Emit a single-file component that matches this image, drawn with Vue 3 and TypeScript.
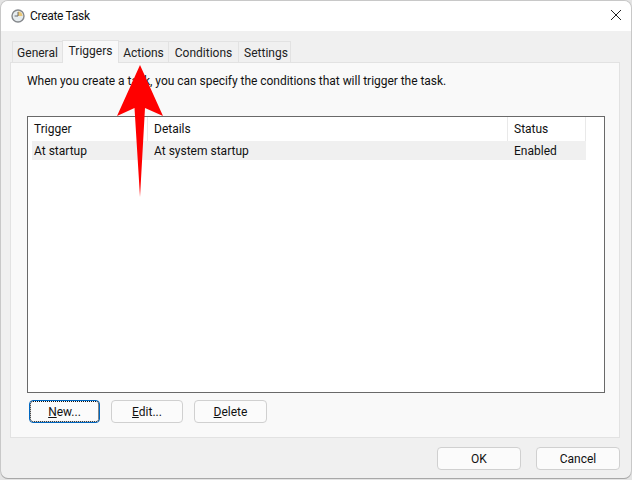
<script setup lang="ts">
const tabs = ['General', 'Triggers', 'Actions', 'Conditions', 'Settings']
const columns = [
  { label: 'Trigger', value: 'At startup', cls: 'c1' },
  { label: 'Details', value: 'At system startup', cls: 'c2' },
  { label: 'Status', value: 'Enabled', cls: 'c3' },
]
</script>

<template>
  <div class="desktop">
    <div class="window">
      <header class="titlebar">
        <svg class="clock" width="14" height="14" viewBox="0 0 14 14">
          <circle cx="7" cy="7" r="6" fill="#e6ecef" stroke="#85888c" stroke-width="1.4" />
          <path d="M7 7 V2.4 A4.6 4.6 0 0 1 11.6 7 Z" fill="#eac777" />
          <path d="M7 3 V7 H3.6" fill="none" stroke="#5b5e62" stroke-width="0.9" />
        </svg>
        <span class="title">Create Task</span>
        <svg class="close" width="10" height="10" viewBox="0 0 10 10">
          <path d="M0 0 L10 10 M10 0 L0 10" stroke="#222" stroke-width="1" fill="none" />
        </svg>
      </header>
      <main class="body">
        <nav class="tabs">
          <div v-for="t in tabs" :key="t" class="tab" :class="{ active: t === 'Triggers' }">{{ t }}</div>
        </nav>
        <section class="panel">
          <p class="hint">When you create a task, you can specify the conditions that will trigger the task.</p>
          <div class="list">
            <div class="row head">
              <div v-for="c in columns" :key="c.label" class="cell" :class="c.cls">{{ c.label }}</div>
            </div>
            <div class="row data">
              <div v-for="c in columns" :key="c.label" class="cell" :class="c.cls">{{ c.value }}</div>
            </div>
          </div>
          <div class="actions">
            <button class="btn focused"><u>N</u>ew...</button>
            <button class="btn edit"><u>E</u>dit...</button>
            <button class="btn small"><u>D</u>elete</button>
          </div>
        </section>
        <footer class="footer">
          <button class="btn large">OK</button>
          <button class="btn large">Cancel</button>
        </footer>
      </main>
    </div>
    <svg class="arrow" width="62" height="136" viewBox="0 0 62 136">
      <path d="M31 1 L54 52 L36 44 L31 133 L25.5 44 L8 52 Z" fill="#ff0000" />
    </svg>
  </div>
</template>

<style>
html, body { margin: 0; background: #e4e4e4; }
</style>

<style scoped>
.desktop {
  position: relative;
  width: 632px;
  height: 480px;
  padding: 1px 1px 2px 1px;
  box-sizing: border-box;
  font-family: Roboto, "Open Sans", sans-serif;
  font-size: 12px;
  color: #111;
}
.window {
  height: 100%;
  display: flex;
  flex-direction: column;
  border-radius: 7px;
  overflow: hidden;
  background: #f0f0f0;
  box-shadow: 0 1px 0 0 #a8a8a8, 0 0 0 1px #c8c8c8;
}
.titlebar {
  height: 30px;
  flex: none;
  box-sizing: border-box;
  background: #fff;
  display: flex;
  align-items: center;
  padding: 0 10px 0 10px;
}
.clock { flex: none; }
.title { margin-left: 5px; letter-spacing: -0.3px; }
.close { margin-left: auto; margin-bottom: 2px; }
.body {
  flex: 1;
  display: flex;
  flex-direction: column;
  padding: 9px 11px 8px 9px;
  min-height: 0;
}
.tabs {
  display: flex;
  height: 23px;
  padding-left: 2px;
  position: relative;
  z-index: 1;
  margin-bottom: -1px;
  align-items: flex-end;
}
.tab {
  height: 21px;
  margin-bottom: 1px;
  line-height: 22px;
  box-sizing: border-box;
  text-align: center;
  background: #f0f0f0;
  border: 1px solid #e2e2e2;
  border-bottom: 0;
  margin-left: -1px;
  color: #222;
}
.tab:nth-child(1) { width: 51px; margin-left: 0; }
.tab:nth-child(2) { width: 57px; }
.tab:nth-child(3) { width: 51px; }
.tab:nth-child(4) { width: 71px; }
.tab:nth-child(5) { width: 53px; padding-left: 3px; }
.tab.active {
  height: 23px;
  margin-bottom: 0;
  line-height: 21px;
  background: #f9f9f9;
}
.panel {
  height: 376px;
  flex: none;
  box-sizing: border-box;
  background: #f9f9f9;
  border: 1px solid #e2e2e2;
  padding: 0 14px 0 16px;
  display: flex;
  flex-direction: column;
}
.hint {
  margin: 9px 0 0;
  height: 44px;
  line-height: 18px;
  letter-spacing: -0.035px;
}
.list {
  height: 277px;
  flex: none;
  box-sizing: border-box;
  background: #fff;
  border: 1px solid #696969;
}
.row { display: flex; width: 558px; }
.row.head { height: 24px; align-items: stretch; }
.row.data { height: 19px; background: #f0f0f0; margin-left: 4px; width: 554px; }
.cell { padding-left: 6px; line-height: 21px; box-sizing: border-box; }
.head .cell { border-right: 1px solid #e9e9e9; padding-top: 2px; }
.c1 { width: 120px; }
.c2 { width: 360px; }
.c3 { width: 78px; }
.data .c1 { width: 116px; padding-left: 2px; }
.actions {
  display: flex;
  gap: 11px;
  margin-top: 7px;
  padding-left: 2px;
}
.btn {
  font: inherit;
  color: #111;
  height: 23px;
  padding: 0;
  box-sizing: border-box;
  border: 1px solid #d0d0d0;
  border-radius: 4px;
  background: #fbfbfb;
}
.btn.edit { width: 72px; }
.btn.small { width: 73px; }
.btn.focused {
  width: 71px;
  border: 1px solid #0067c0;
  outline: 1px dotted #111;
  outline-offset: -2px;
}
.btn.large { width: 84px; }
.footer {
  display: flex;
  justify-content: flex-end;
  gap: 15px;
  margin-top: 9px;
}
.arrow {
  position: absolute;
  left: 109px;
  top: 64px;
}
</style>
